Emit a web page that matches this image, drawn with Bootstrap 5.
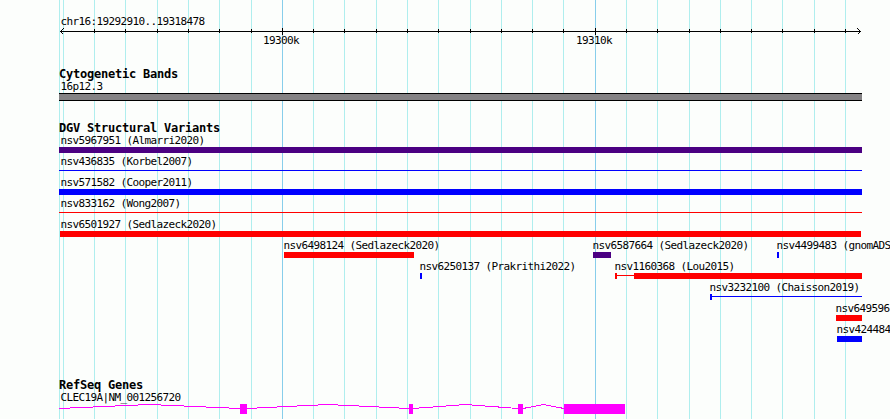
<!DOCTYPE html>
<html lang="en">
<head>
  <meta charset="UTF-8" />
  <meta name="viewport" content="width=device-width, initial-scale=1.0" />
  <title>chr16:19292910..19318478</title>
  <link href="https://cdn.jsdelivr.net/npm/bootstrap@5.3.0/dist/css/bootstrap.min.css" rel="stylesheet">
  <style>
    body {
      font-family: 'DejaVu Sans Mono', 'Liberation Mono', monospace;
      font-size: 11px;
      letter-spacing: -0.62px;
      line-height: 13px;
      color: #000;
      background-color: #fcfefc;
    }
    .browser {
      width: 890px;
      height: 419px;
      padding-top: 15px;
    }
    .grid-lines {
      z-index: 0;
    }
    .tracks {
      z-index: 1;
    }
    .region-name {
      padding-left: 60.4px;
    }
    .ruler {
      height: 20px;
      margin-bottom: 19px;
    }
    .track-title {
      font-size: 12px;
      letter-spacing: -0.22px;
      line-height: 14px;
      padding-left: 59px;
      margin: 0 0 -1px;
    }
    .bands {
      margin-bottom: 20px;
    }
    .variants {
      margin-bottom: 34px;
    }
    .lane {
      height: 21px;
    }
    /* features sit at their genome coordinate inside a lane */
    .feature-label, .feature {
      position: absolute;
      white-space: pre;
    }
    .feature-label {
      top: 0;
    }
    .feature {
      top: 13px;
      height: 6px;
    }
    .feature.thin {
      top: 15px;
      height: 1px;
    }
    .feature.band {
      height: 8px;
      border: solid #000;
      border-width: 1px 0;
    }
    .bg-gain { background-color: #00f; }
    .bg-loss { background-color: #f00; }
    .bg-both { background-color: #4b0082; }
    .bg-band { background-color: #848284; }
    svg {
      display: block;
      shape-rendering: crispEdges;
    }
  </style>
</head>
<body>

<div class="browser position-relative overflow-hidden">
  <svg class="grid-lines position-absolute top-0 start-0" id="grid" width="890" height="419"></svg>

  <div class="tracks position-relative">
    <div class="region-name">chr16:19292910..19318478</div>
    <svg class="ruler" id="ruler" width="890" height="20"></svg>

    <section class="bands">
      <h2 class="track-title fw-bold">Cytogenetic Bands</h2>
      <div id="bands"></div>
    </section>

    <section class="variants">
      <h2 class="track-title fw-bold">DGV Structural Variants</h2>
      <div id="variants"></div>
    </section>

    <section>
      <h2 class="track-title fw-bold">RefSeq Genes</h2>
      <div class="lane position-relative">
        <span class="feature-label" style="left: 60.4px">CLEC19A|NM_001256720</span>
        <svg width="890" height="28">
          <g fill="none" stroke="#f0f">
            <path d="M59 17.5L149.5 13.5L240 17.5"/>
            <path d="M247 17.5L328 13.5L409 17.5"/>
            <path d="M413 17.5L465.5 13.5L518 17.5"/>
            <path d="M523 17.5L543.5 13.5L564 17.5"/>
          </g>
          <g fill="#f0f">
            <rect x="240" y="13" width="7" height="10"/>
            <rect x="409" y="13" width="4" height="10"/>
            <rect x="518" y="13" width="5" height="10"/>
            <rect x="564" y="13" width="61" height="10"/>
          </g>
        </svg>
      </div>
    </section>
  </div>
</div>

<script src="https://cdn.jsdelivr.net/npm/bootstrap@5.3.0/dist/js/bootstrap.bundle.min.js"></script>
<script>
  const ticks = [63, 94, 125, 157, 188, 219, 251, 282, 313, 344, 376, 407, 438, 470,
    501, 532, 563, 595, 626, 657, 689, 720, 751, 782, 814, 845];
  const majors = { 282: '19300k', 595: '19310k' };

  // grid
  let grid = '<rect x="59" y="0" width="1" height="419" fill="#afeeee"/>';
  ticks.forEach(x => {
    grid += `<rect x="${x}" y="0" width="1" height="419" fill="${majors[x] ? '#87ceeb' : '#afeeee'}"/>`;
  });
  document.getElementById('grid').innerHTML = grid;

  // ruler
  let ruler = '<rect x="60" y="3" width="801" height="1"/>' +
    '<path d="M63.5 0.5L60.5 3.5L63.5 6.5M857.5 0.5L860.5 3.5L857.5 6.5" fill="none" stroke="#000"/>';
  ticks.slice(1).forEach(x => {
    if (majors[x]) {
      ruler += `<rect x="${x}" y="0" width="1" height="7"/>`;
      ruler += `<text x="${x - 19}" y="16">${majors[x]}</text>`;
    } else {
      ruler += `<rect x="${x}" y="1" width="1" height="4"/>`;
    }
  });
  document.getElementById('ruler').innerHTML = ruler;

  // each shape is [start, end, class]
  const bands = [
    [{ name: '16p12.3', x: 60.4, shapes: [[59, 862, 'band bg-band']] }]
  ];
  const variants = [
    [{ name: 'nsv5967951 (Almarri2020)', x: 60.4, shapes: [[59, 862, 'bg-both']] }],
    [{ name: 'nsv436835 (Korbel2007)', x: 60.4, shapes: [[59, 862, 'thin bg-gain']] }],
    [{ name: 'nsv571582 (Cooper2011)', x: 60.4, shapes: [[59, 862, 'bg-gain']] }],
    [{ name: 'nsv833162 (Wong2007)', x: 60.4, shapes: [[59, 862, 'thin bg-loss']] }],
    [{ name: 'nsv6501927 (Sedlazeck2020)', x: 60.4, shapes: [[60, 861, 'bg-loss']] }],
    [
      { name: 'nsv6498124 (Sedlazeck2020)', x: 283.4, shapes: [[284, 414, 'bg-loss']] },
      { name: 'nsv6587664 (Sedlazeck2020)', x: 592.4, shapes: [[593, 611, 'bg-both']] },
      { name: 'nsv4499483 (gnomADS', x: 776.4, shapes: [[777, 779, 'bg-gain']] }
    ],
    [
      { name: 'nsv6250137 (Prakrithi2022)', x: 419.4, shapes: [[420, 422, 'bg-gain']] },
      { name: 'nsv1160368 (Lou2015)', x: 614.4, shapes: [[615, 617, 'bg-loss'], [617, 634, 'thin bg-loss'], [634, 862, 'bg-loss']] }
    ],
    [{ name: 'nsv3232100 (Chaisson2019)', x: 709.4, shapes: [[710, 712, 'bg-gain'], [712, 862, 'thin bg-gain']] }],
    [{ name: 'nsv649596', x: 835.4, shapes: [[836, 862, 'bg-loss']] }],
    [{ name: 'nsv424484', x: 836.4, shapes: [[837, 862, 'bg-gain']] }]
  ];

  function drawLanes(id, lanes) {
    document.getElementById(id).innerHTML = lanes.map(lane => {
      const items = lane.map(item => {
        const shapes = item.shapes.map(([from, to, cls]) =>
          `<div class="feature ${cls}" style="left: ${from}px; width: ${to - from}px"></div>`).join('');
        return `<span class="feature-label" style="left: ${item.x}px">${item.name}</span>${shapes}`;
      }).join('');
      return `<div class="lane position-relative">${items}</div>`;
    }).join('');
  }

  drawLanes('bands', bands);
  drawLanes('variants', variants);
</script>

</body>
</html>
